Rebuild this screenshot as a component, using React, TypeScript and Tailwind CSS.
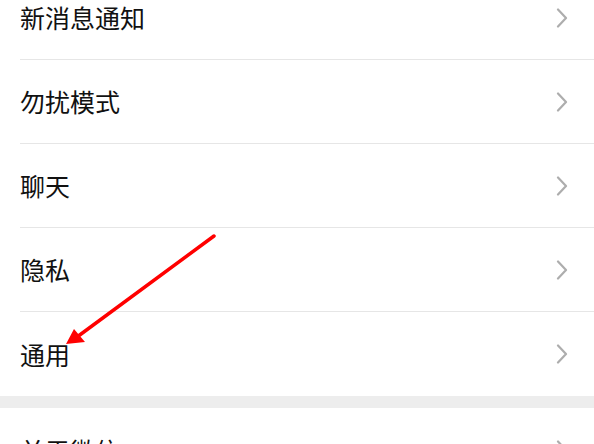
import React from "react";

const items = ["新消息通知", "勿扰模式", "聊天", "隐私", "通用"];

function Chevron() {
  return (
    <svg width="12" height="20" viewBox="0 0 12 20" className="shrink-0">
      <polyline points="2,1.5 10,10 2,18.5" fill="none" stroke="#adadad" strokeWidth="2.2" strokeLinecap="round" strokeLinejoin="round" />
    </svg>
  );
}

function Row({ label, last }: { label: string; last?: boolean }) {
  return (
    <div className="h-[84px] bg-white pl-5">
      <div className={`h-full flex items-center justify-between pr-[26px] ${last ? "" : "border-b border-[#e6e6e6]"}`}>
        <span className="text-[25px] leading-none text-[#111111]">{label}</span>
        <Chevron />
      </div>
    </div>
  );
}

export default function App() {
  return (
    <div
      className="relative w-[594px] h-[444px] overflow-hidden bg-white"
      style={{ fontFamily: '"Noto Sans CJK SC", "Noto Sans", sans-serif' }}
    >
      <div className="-mt-[24px]">
        {items.map((l, i) => (
          <Row key={l} label={l} last={i === items.length - 1} />
        ))}
        <div className="h-[12px] bg-[#ededed]" />
        <Row label="关于微信" last />
      </div>
      <svg className="absolute left-0 top-0 pointer-events-none" width="594" height="444">
        <line x1="214" y1="236" x2="77" y2="337" stroke="#ff0000" strokeWidth="3.5" strokeLinecap="round" />
        <polygon points="66,344 74,329 85,342" fill="#ff0000" />
      </svg>
    </div>
  );
}
